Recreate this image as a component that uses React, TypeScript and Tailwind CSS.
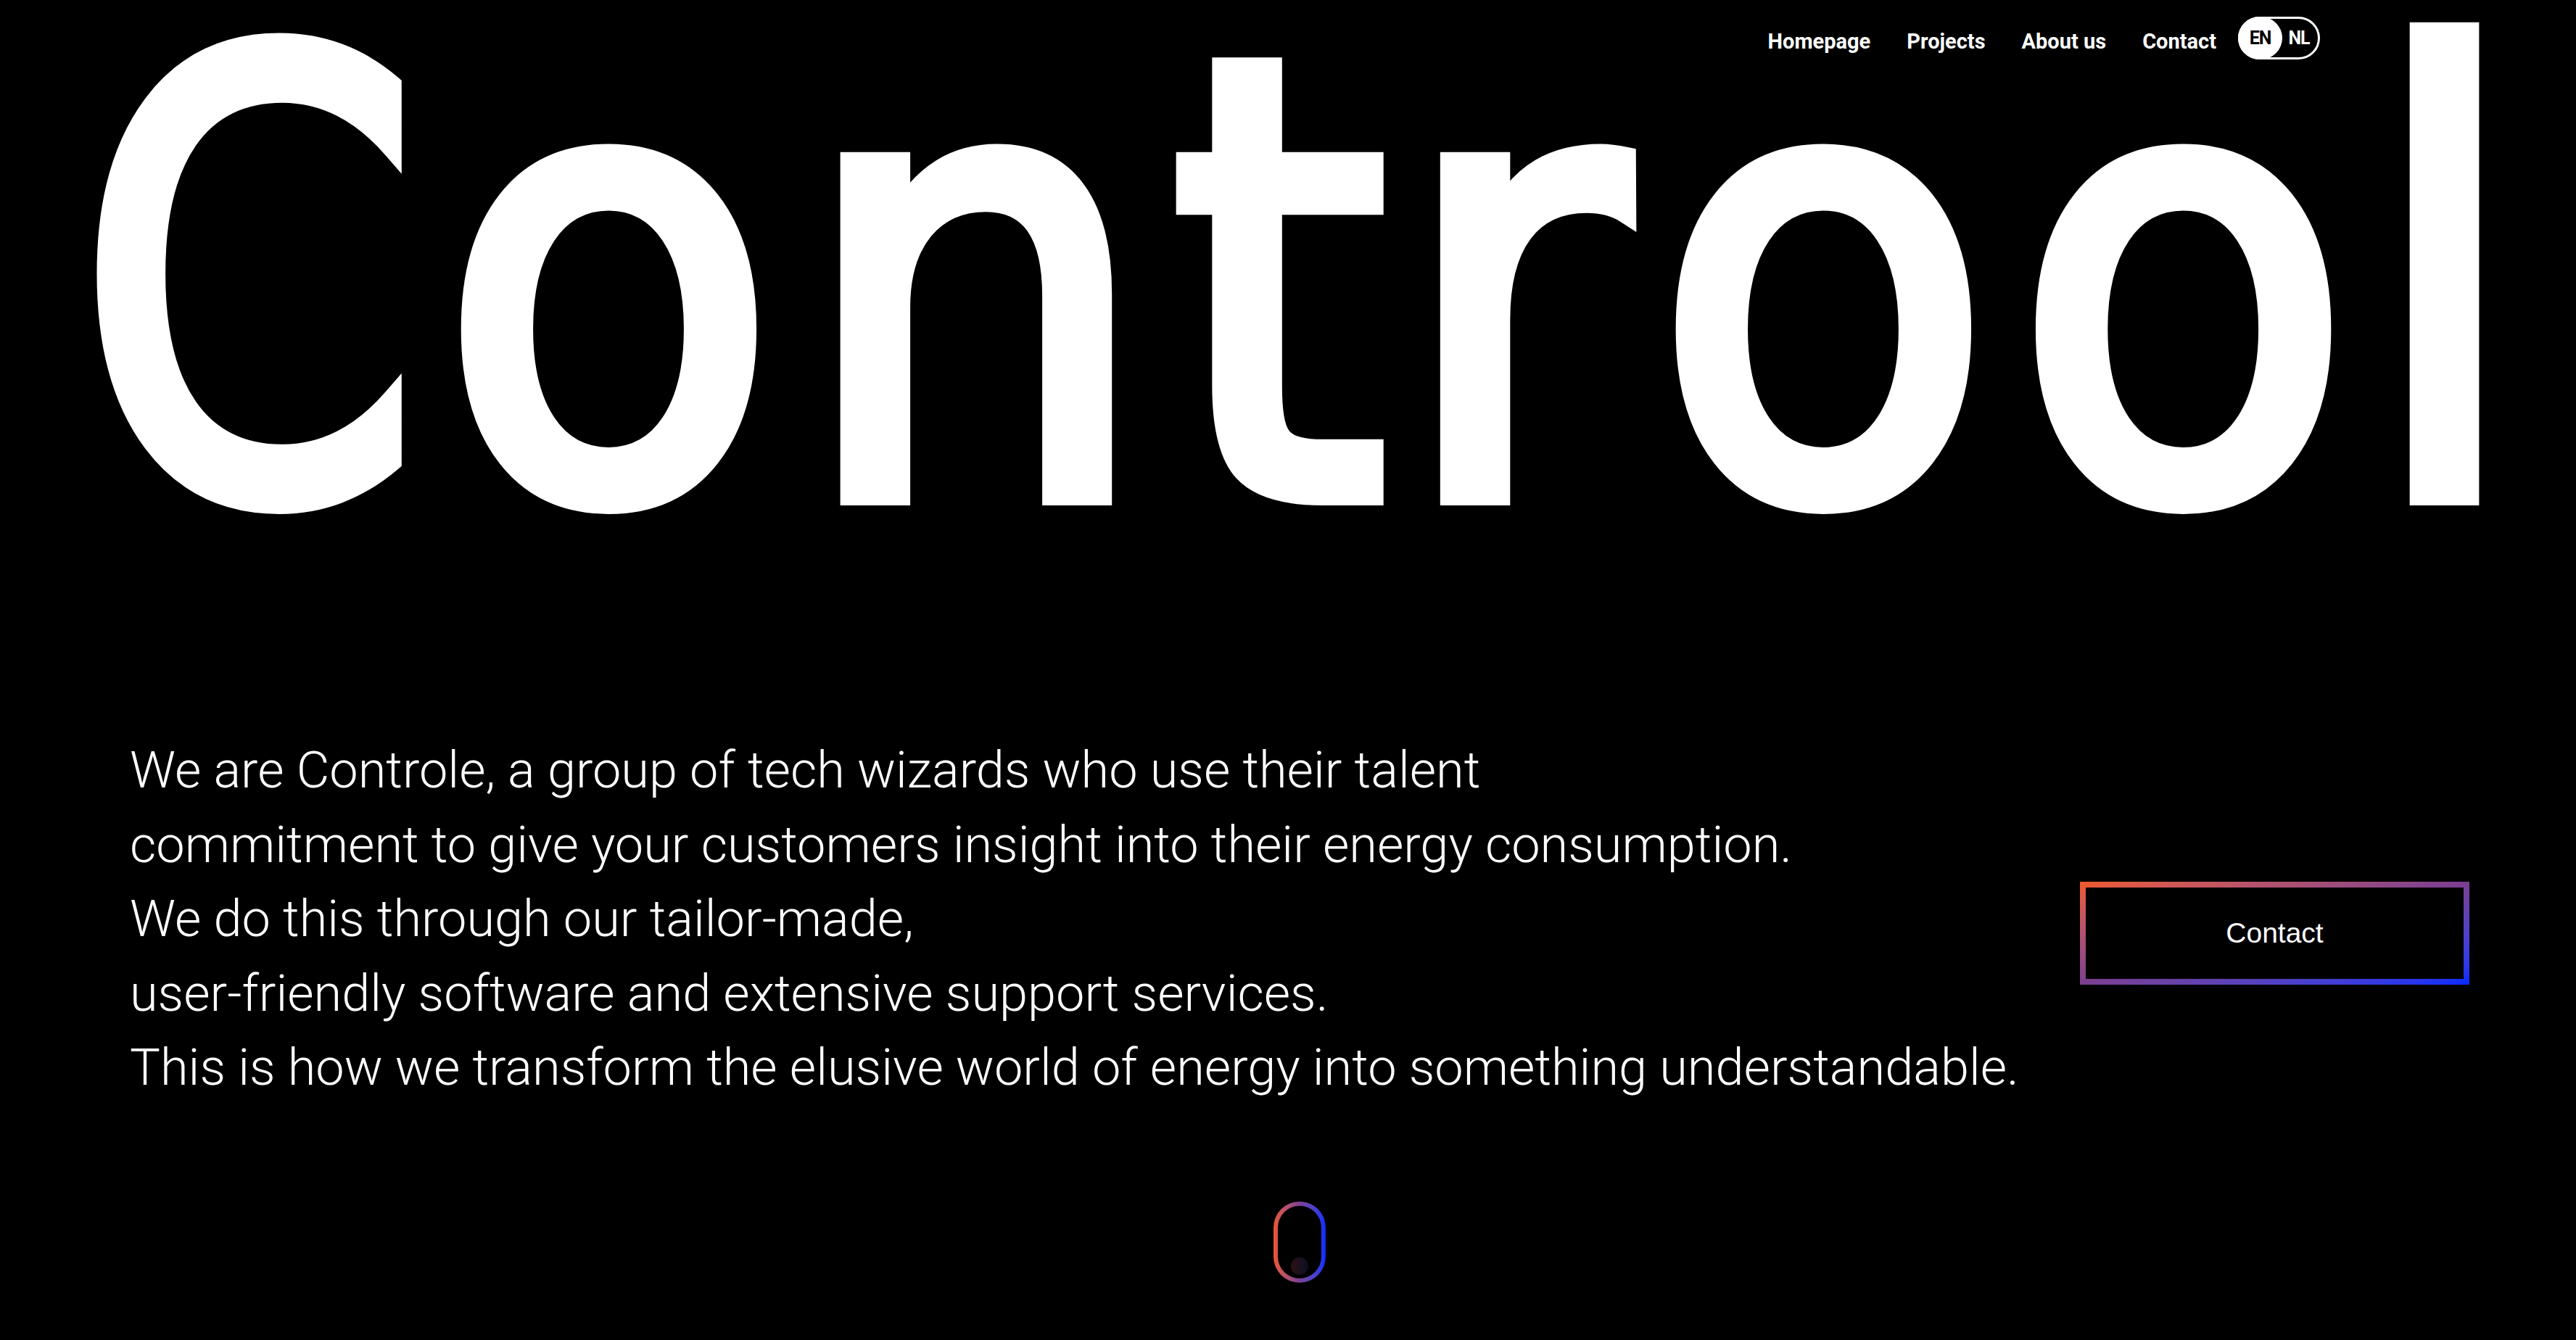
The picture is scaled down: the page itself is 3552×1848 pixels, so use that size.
import { useState } from 'react';

const links = ['Homepage', 'Projects', 'About us', 'Contact'];

// letters of the wordmark with their own spacing, the face we have is not the original one
const wordmark = [
  { ch: 'C', cls: 'inline-block origin-left scale-x-[0.89] tracking-[-28px]' },
  { ch: 'o', cls: 'tracking-[34px]' },
  { ch: 'n', cls: 'tracking-[32px]' },
  { ch: 't', cls: 'tracking-[20px]' },
  { ch: 'r', cls: 'tracking-[41px]' },
  { ch: 'o', cls: 'tracking-[34px]' },
  { ch: 'o', cls: 'tracking-[24px]' },
  { ch: 'l', cls: 'tracking-[0px]' },
];

const LangToggle = () => {
  const [lang, setLang] = useState<'EN' | 'NL'>('EN');
  return (
    <button
      onClick={() => setLang(lang === 'EN' ? 'NL' : 'EN')}
      className="relative flex h-[59px] w-[113px] items-center rounded-full border-[3px] border-white font-['Roboto',sans-serif] text-[25px] font-bold tracking-[-1px]"
    >
      <span className={`absolute top-[-3px] bottom-[-3px] w-[61px] rounded-full bg-white ${lang === 'EN' ? 'left-[-3px]' : 'right-[-3px]'}`} />
      <span className={`relative z-10 w-[55px] text-center ${lang === 'EN' ? 'text-black' : 'text-white'}`}>EN</span>
      <span className={`relative z-10 w-[52px] text-center ${lang === 'NL' ? 'text-black' : 'text-white'}`}>NL</span>
    </button>
  );
};

const Header = () => (
  <header className="absolute top-[23px] right-[353px] z-20 flex items-center gap-[30px]">
    <nav className="flex items-center gap-[50px] pt-[10px] font-['Roboto',sans-serif] text-[29px] font-bold text-white">
      {links.map((l) => (
        <a key={l} href="#" className="leading-none">
          {l}
        </a>
      ))}
    </nav>
    <LangToggle />
  </header>
);

/* ───────── scroll hint ───────── */
const ScrollHint = () => (
  <div className="flex justify-center pl-8">
    <div className="h-[112px] w-[72px] rounded-full bg-linear-to-r from-[#ec5429] via-[#7d3f94] to-[#0029ff] p-[6px]">
      <div className="flex h-full w-full items-end justify-center rounded-full bg-black pb-[5px]">
        <div className="h-[24px] w-[24px] rounded-full bg-linear-to-r from-[#2c1212] to-[#0c0c24]" />
      </div>
    </div>
  </div>
);

export default function App() {
  return (
    <div className="relative h-[1848px] w-full overflow-hidden bg-black text-white">
      <Header />

      {/* huge wordmark */}
      <h1 className="pl-[108px] font-['DejaVu_Sans_Condensed','DejaVu_Sans',sans-serif] text-[840px] leading-[784px] font-normal whitespace-nowrap font-stretch-condensed [-webkit-text-stroke:28px_white]">
        {wordmark.map((l, i) => (
          <span key={i} className={l.cls}>
            {l.ch}
          </span>
        ))}
      </h1>

      <section className="mt-[227px] flex items-start justify-between pr-[147px] pl-[179px]">
        <p className="font-['Roboto',sans-serif] text-[70.3px] leading-[102.5px] font-light whitespace-nowrap">
          We are Controle, a group of tech wizards who use their talent
          <br />
          commitment to give your customers insight into their energy consumption.
          <br />
          We do this through our tailor-made,
          <br />
          user-friendly software and extensive support services.
          <br />
          This is how we transform the elusive world of energy into something understandable.
        </p>

        <a
          href="#"
          className="mt-[205px] block bg-linear-to-br from-[#f05a28] via-[#7b3e91] to-[#0029ff] p-[8px]"
        >
          <span className="flex h-[126px] w-[521px] items-center justify-center bg-black font-['Liberation_Sans',sans-serif] text-[39px] text-white">
            Contact
          </span>
        </a>
      </section>

      <div className="mt-[133px]">
        <ScrollHint />
      </div>
    </div>
  );
}
